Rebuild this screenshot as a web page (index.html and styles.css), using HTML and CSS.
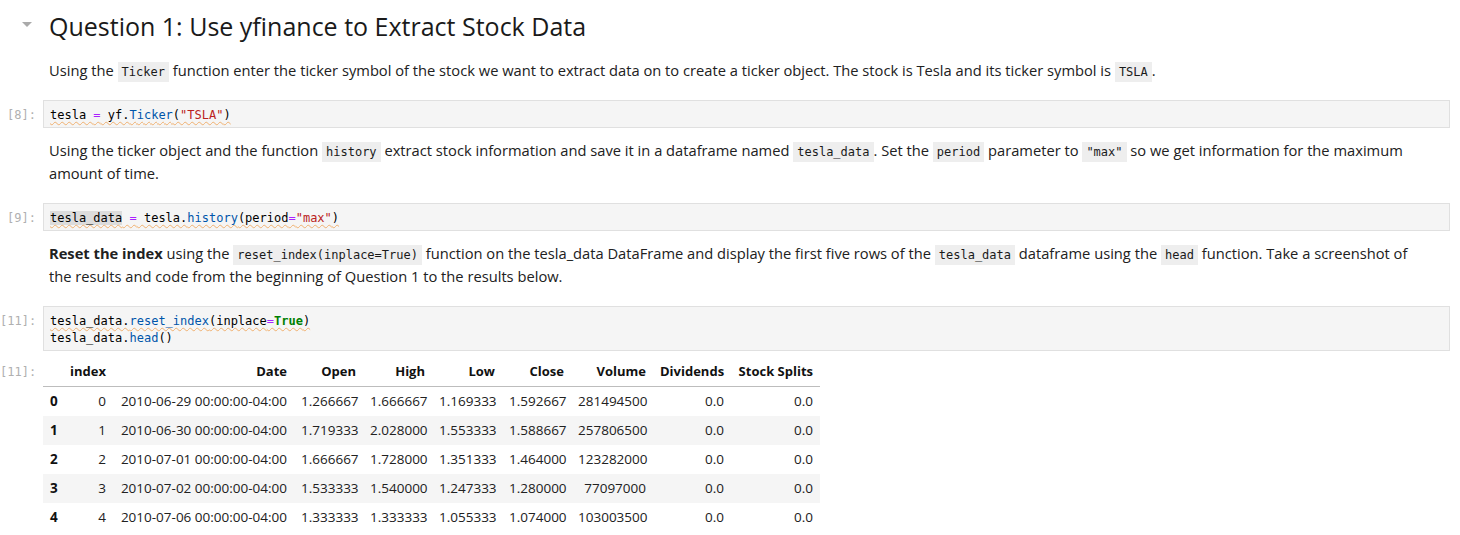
FILE: index.html
```html
<!DOCTYPE html>
<html>
<head>
<meta charset="utf-8">
<title>Notebook</title>
<link rel="stylesheet" href="styles.css">
</head>
<body>
<div class="notebook">

  <div class="cell md first">
    <div class="prompt caret-wrap">
      <svg class="caret" width="10" height="5" viewBox="0 0 10 5"><polygon points="0,0 10,0 5,5" fill="#aaaaaa"/></svg>
    </div>
    <div class="md-body">
      <h2>Question 1: Use yfinance to Extract Stock Data</h2>
      <p class="p-first">Using the <code>Ticker</code> function enter the ticker symbol of the stock we want to extract data on to create a ticker object. The stock is Tesla and its ticker symbol is <code>TSLA</code>.</p>
    </div>
  </div>

  <div class="cell code">
    <div class="prompt">[8]:</div>
    <div class="editor"><pre><span class="sq">tesla <span class="op">=</span> yf.<span class="pr">Ticker</span>(<span class="str">"TSLA"</span>)</span></pre></div>
  </div>

  <div class="cell md">
    <div class="prompt"></div>
    <div class="md-body">
      <p>Using the ticker object and the function <code>history</code> extract stock information and save it in a dataframe named <code>tesla_data</code>. Set the <code>period</code> parameter to <code>"max"</code> so we get information for the maximum amount of time.</p>
    </div>
  </div>

  <div class="cell code">
    <div class="prompt">[9]:</div>
    <div class="editor"><pre><span class="sq"><span class="hl">tesla_data</span> <span class="op">=</span> tesla.<span class="pr">history</span>(period<span class="op">=</span><span class="str">"max"</span>)</span></pre></div>
  </div>

  <div class="cell md">
    <div class="prompt"></div>
    <div class="md-body">
      <p><strong>Reset the index</strong> using the <code>reset_index(inplace=True)</code> function on the tesla_data DataFrame and display the first five rows of the <code>tesla_data</code> dataframe using the <code>head</code> function. Take a screenshot of the results and code from the beginning of Question 1 to the results below.</p>
    </div>
  </div>

  <div class="cell code">
    <div class="prompt">[11]:</div>
    <div class="editor"><pre><span class="sq">tesla_data.<span class="pr">reset_index</span>(inplace<span class="op">=</span><span class="kw">True</span>)</span>
tesla_data.<span class="pr">head</span>()</pre></div>
  </div>

  <div class="cell output">
    <div class="prompt out-prompt">[11]:</div>
    <div class="out-body">
      <table class="df">
        <colgroup>
          <col style="width:20px"><col style="width:50px"><col style="width:181px"><col style="width:69px"><col style="width:69px"><col style="width:70px"><col style="width:69px"><col style="width:82px"><col style="width:78px"><col style="width:89px">
        </colgroup>
        <thead>
          <tr><th></th><th>index</th><th>Date</th><th>Open</th><th>High</th><th>Low</th><th>Close</th><th>Volume</th><th>Dividends</th><th>Stock Splits</th></tr>
        </thead>
        <tbody>
          <tr><th>0</th><td>0</td><td>2010-06-29 00:00:00-04:00</td><td>1.266667</td><td>1.666667</td><td>1.169333</td><td>1.592667</td><td>281494500</td><td>0.0</td><td>0.0</td></tr>
          <tr><th>1</th><td>1</td><td>2010-06-30 00:00:00-04:00</td><td>1.719333</td><td>2.028000</td><td>1.553333</td><td>1.588667</td><td>257806500</td><td>0.0</td><td>0.0</td></tr>
          <tr><th>2</th><td>2</td><td>2010-07-01 00:00:00-04:00</td><td>1.666667</td><td>1.728000</td><td>1.351333</td><td>1.464000</td><td>123282000</td><td>0.0</td><td>0.0</td></tr>
          <tr><th>3</th><td>3</td><td>2010-07-02 00:00:00-04:00</td><td>1.533333</td><td>1.540000</td><td>1.247333</td><td>1.280000</td><td>77097000</td><td>0.0</td><td>0.0</td></tr>
          <tr><th>4</th><td>4</td><td>2010-07-06 00:00:00-04:00</td><td>1.333333</td><td>1.333333</td><td>1.055333</td><td>1.074000</td><td>103003500</td><td>0.0</td><td>0.0</td></tr>
        </tbody>
      </table>
    </div>
  </div>

</div>
</body>
</html>
```

FILE: styles.css
```css
* { box-sizing: border-box; }

html, body {
  margin: 0;
  padding: 0;
  background: #ffffff;
}

body {
  font-family: "Open Sans", "Noto Sans", sans-serif;
  color: #212121;
  font-size: 14.7px;
}

.notebook {
  padding: 9px 10px 0 0;
  width: 1460px;
}

.cell {
  display: grid;
  grid-template-columns: 43px 1fr;
}

.prompt {
  font-family: "DejaVu Sans Mono", "Liberation Mono", monospace;
  font-size: 12px;
  line-height: 17px;
  color: #b0b0b0;
  text-align: right;
  padding-right: 7px;
  padding-top: 7px;
  white-space: nowrap;
}

.caret-wrap {
  display: flex;
  justify-content: flex-end;
  align-items: flex-start;
  padding-top: 13px;
  padding-right: 11px;
}

.caret { display: block; }

/* markdown cells */
.md .md-body {
  padding: 11px 32px 18px 6px;
}

.md.first .md-body {
  padding-top: 0;
}

.md h2 {
  margin: 0;
  font-size: 25px;
  line-height: 34px;
  font-weight: 400;
  color: #1a1a1a;
}

.md p {
  margin: 0;
  line-height: 23px;
}

.md p.p-first {
  margin-top: 16px;
}

.md code {
  font-family: "DejaVu Sans Mono", "Liberation Mono", monospace;
  font-size: 12px;
  line-height: 1;
  background: #eeeeee;
  color: #1a1a1a;
  padding: 3px 4px;
}

.md strong { font-weight: 700; }

/* code cells */
.editor {
  background: #f5f5f5;
  border: 1px solid #e0e0e0;
  padding: 6px 6px 3px 6px;
}

.editor pre {
  margin: 0;
  font-family: "DejaVu Sans Mono", "Liberation Mono", monospace;
  font-size: 12px;
  line-height: 17px;
  color: #000000;
}

.sq {
  text-decoration: underline wavy #f0b070;
  text-decoration-thickness: 1px;
  text-underline-offset: 2px;
}

.hl { background: #dcdcdc; }
.op { color: #aa22ff; }
.pr { color: #0055aa; }
.str { color: #ba2121; }
.kw { color: #008000; font-weight: 700; }

/* output */
.output {
  margin-top: 7px;
}

.out-prompt {
  padding-top: 6px;
}

.df {
  border-collapse: collapse;
  table-layout: fixed;
  width: 777px;
  font-family: "Open Sans", "Noto Sans", sans-serif;
  font-size: 13.5px;
  color: #212121;
}

.df th, .df td {
  text-align: right;
  padding: 6px 7px;
  line-height: 17px;
  white-space: nowrap;
  border: none;
}

.df thead th {
  font-weight: 700;
  color: #111111;
  font-size: 13px;
  padding: 5px 7px 6px 7px;
  border-bottom: 1px solid #bdbdbd;
}

.df tbody th {
  text-align: left;
  font-weight: 700;
  color: #111111;
}

.df tbody tr:nth-child(even) {
  background: #f5f5f5;
}
```
